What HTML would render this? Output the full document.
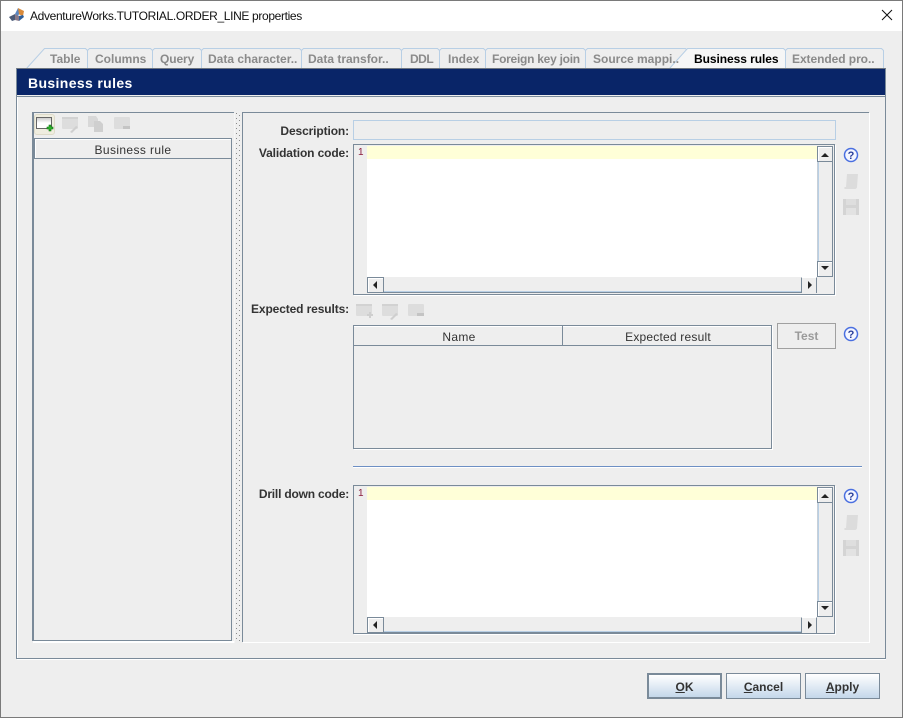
<!DOCTYPE html>
<html>
<head>
<meta charset="utf-8">
<style>
html,body{margin:0;padding:0;width:903px;height:718px;overflow:hidden;background:#eee}
body{position:relative;font-family:"Liberation Sans",sans-serif;font-size:12px;color:#333}
.a{position:absolute;box-sizing:border-box}
.t{position:absolute;white-space:nowrap;line-height:14px}
.lab{position:absolute;white-space:nowrap;line-height:14px;font-weight:bold;color:#333;text-align:right;right:554px;letter-spacing:-.12px}
.tab{position:absolute;top:52px;height:14px;line-height:14px;font-weight:bold;color:#8a8a8a;white-space:nowrap}
.btn{position:absolute;top:673px;height:26px;width:75px;box-sizing:border-box;border:1px solid #7a8a99;background:linear-gradient(#fff,#c4d7ea);text-align:center;font-weight:bold;line-height:26px;color:#333}
.btn u{text-decoration:underline}
svg{position:absolute;display:block}
</style>
</head>
<body>
<!-- window frame and title -->
<div class="a" style="left:0;top:0;width:903px;height:31px;background:#fff"></div>
<div class="t" style="left:30px;top:9px;font-size:12px;color:#111;letter-spacing:-.35px">AdventureWorks.TUTORIAL.ORDER_LINE properties</div>
<svg style="left:9px;top:7px" width="17" height="15" viewBox="0 0 17 15"><path d="M0 10l6-3v6l-3 1z" fill="#4a5a78"/><path d="M6 7l4 2v5l-4-1z" fill="#8a7a88"/><path d="M9 1l6 3-1 5-5-2z" fill="#d98a3a"/><path d="M9 1L6 7l3 2 1-2z" fill="#5a86c0"/><path d="M14 8l1 2-5 4v-5z" fill="#2f5f9a"/></svg>
<svg style="left:881px;top:9px" width="12" height="12" viewBox="0 0 12 12"><path d="M1 1l10 10M11 1L1 11" stroke="#111" stroke-width="1" fill="none"/></svg>

<!-- tabs -->
<svg style="left:0;top:45px" width="903" height="26" viewBox="0 0 903 26">
<g fill="#eee" stroke="#b8cfe5" stroke-width="1">
<path d="M26.500 23.500L44.500 3.500H85.500l2 2V23.500z" fill="#f0f0f0"/>
<path d="M87.500 23.500V5.500l2-2H150.500l2 2V23.500z"/>
<path d="M152.500 23.500V5.500l2-2H199.500l2 2V23.500z"/>
<path d="M201.500 23.500V5.500l2-2H299.500l2 2V23.500z"/>
<path d="M301.500 23.500V5.500l2-2H399.500l2 2V23.500z"/>
<path d="M401.500 23.500V5.500l2-2H437.500l2 2V23.500z"/>
<path d="M439.500 23.500V5.500l2-2H483.500l2 2V23.500z"/>
<path d="M485.500 23.500V5.500l2-2H583.500l2 2V23.500z"/>
<path d="M585.500 23.500V5.500l2-2H685.500l2 2V23.500z"/>
<path d="M785.500 23.500V5.500l2-2H881.500l2 2V23.500z"/>
<path d="M669.500 23.500L687.500 3.500H783.500l2 2V23.500z" fill="#f6f6f6"/>
</g>
</svg>
<div class="tab" style="left:50px">Table</div>
<div class="tab" style="left:95px">Columns</div>
<div class="tab" style="left:160px;letter-spacing:-.1px">Query</div>
<div class="tab" style="left:208px">Data character..</div>
<div class="tab" style="left:308px">Data transfor..</div>
<div class="tab" style="left:410px;letter-spacing:-.5px">DDL</div>
<div class="tab" style="left:448px">Index</div>
<div class="tab" style="left:492px;letter-spacing:-.26px">Foreign key join</div>
<div class="tab" style="left:593px">Source mappi..</div>
<div class="tab" style="left:694px;color:#000;letter-spacing:-.06px">Business rules</div>
<div class="tab" style="left:792px;letter-spacing:-.06px">Extended pro..</div>

<!-- tab panel -->
<div class="a" style="left:16px;top:68px;width:870px;height:591px;border:1px solid #7a8a99;border-top-color:#6e7680"></div>
<div class="a" style="left:17px;top:96px;width:868px;height:1px;background:#7a8a99"></div>
<div class="a" style="left:17px;top:659px;width:869px;height:1px;background:#fff"></div>
<div class="a" style="left:17px;top:97px;width:1px;height:561px;background:#fff"></div>
<div class="a" style="left:17px;top:69px;width:868px;height:26px;background:#092568"></div>
<div class="t" style="left:28px;top:76px;font-size:14px;font-weight:bold;color:#fff;letter-spacing:.36px">Business rules</div>

<!-- left pane -->
<div class="a" style="left:32px;top:112px;width:202px;height:1px;background:#7a8a99"></div>
<div class="a" style="left:32px;top:112px;width:2px;height:529px;background:#7a8a99"></div>
<div class="a" style="left:34px;top:138px;width:198px;height:21px;background:#eee;border:1px solid #7a8a99;box-shadow:inset 1px 1px 0 #fff"></div>
<div class="t" style="left:34px;width:198px;top:143px;text-align:center;color:#333;letter-spacing:.38px">Business rule</div>
<div class="a" style="left:231px;top:158px;width:1px;height:483px;background:#7a8a99"></div>
<div class="a" style="left:34px;top:640px;width:198px;height:1px;background:#7a8a99"></div>
<div class="a" style="left:33px;top:641px;width:201px;height:2px;background:#fff"></div>
<div class="a" style="left:234px;top:113px;width:1px;height:530px;background:#f6f6f6"></div>
<!-- add button + icons -->
<div class="a" style="left:34px;top:114px;width:21px;height:21px;background:#efeddf;border:1px solid #dedbc9;border-radius:3px"></div>
<svg style="left:36px;top:117px" width="18" height="16" viewBox="0 0 18 16"><defs><linearGradient id="g" x1="0" y1="0" x2="0" y2="1"><stop offset="0" stop-color="#c8c8c8"/><stop offset=".5" stop-color="#fff"/></linearGradient></defs><rect x=".5" y=".5" width="15" height="11" fill="url(#g)" stroke="#666"/><path d="M11 10h2V8h2v2h2v2h-2v2h-2v-2h-2z" fill="#2fb52f" stroke="#0c6e0c" stroke-width=".6"/></svg>
<svg style="left:62px;top:117px" width="18" height="16" viewBox="0 0 18 16"><rect width="16" height="12" rx="1" fill="#ddd"/><rect width="16" height="2" fill="#d2d2d2"/><path d="M8 15l6-6 2 1-6 6z" fill="#cfcfcf"/></svg>
<svg style="left:88px;top:116px" width="17" height="17" viewBox="0 0 17 17"><path d="M0 0h8l2 3v8H0z" fill="#d8d8d8"/><path d="M6 5h6l3 3v8H6z" fill="#cfcfcf"/></svg>
<svg style="left:114px;top:117px" width="17" height="14" viewBox="0 0 17 14"><rect width="16" height="12" rx="1" fill="#ddd"/><rect x="9" y="9" width="7" height="3" fill="#c4c4c4"/></svg>

<!-- splitter -->
<svg style="left:236px;top:113px" width="5" height="530" viewBox="0 0 5 530">
<defs><pattern id="d" width="5" height="5" patternUnits="userSpaceOnUse"><rect x="0" y="0" width="1" height="1" fill="#8a8a8a"/><rect x="3" y="2" width="1" height="1" fill="#8a8a8a"/></pattern></defs>
<rect width="5" height="530" fill="url(#d)"/></svg>

<!-- right pane -->
<div class="a" style="left:242px;top:112px;width:627px;height:1px;background:#7a8a99"></div>
<div class="a" style="left:242px;top:112px;width:1px;height:530px;background:#7a8a99"></div>
<div class="a" style="left:869px;top:113px;width:1px;height:530px;background:#fff"></div>
<div class="a" style="left:243px;top:642px;width:627px;height:1px;background:#fff"></div>

<div class="lab" style="top:124px">Description:</div>
<div class="a" style="left:353px;top:120px;width:483px;height:20px;border:1px solid #b8cfe5;background:#eee"></div>
<div class="lab" style="top:146px">Validation code:</div>

<!-- editor 1 -->
<div class="a" style="left:353px;top:144px;width:482px;height:151px;border:1px solid #7a8a99;background:#eee;box-shadow:1px 1px 0 #fff"></div>
<div class="a" style="left:367px;top:146px;width:450px;height:13px;background:#ffffd8"></div>
<div class="a" style="left:367px;top:159px;width:450px;height:118px;background:#fff"></div>
<div class="t" style="left:358px;top:146px;font-size:10px;line-height:14px;color:#8a1c3c">1</div>
<!-- v scrollbar -->
<div class="a" style="left:817px;top:146px;width:16px;height:131px;border-right:1px solid #7a8a99;border-left:1px solid #c8d0d8;background:#eee"></div>
<div class="a" style="left:817px;top:146px;width:16px;height:16px;background:#eee;border:1px solid #7a8a99;box-shadow:inset 1px 1px 0 #fff"></div>
<div class="a" style="left:817px;top:261px;width:16px;height:16px;background:#eee;border:1px solid #7a8a99;box-shadow:inset 1px 1px 0 #fff"></div>
<div class="a" style="left:818px;top:162px;width:1px;height:99px;background:#b8cfe5"></div>
<svg style="left:820px;top:152px" width="10" height="5"><path d="M1 5L5 1l4 4z" fill="#222"/></svg>
<svg style="left:820px;top:266px" width="10" height="5"><path d="M1 0h8L5 4z" fill="#222"/></svg>
<!-- h scrollbar -->
<div class="a" style="left:367px;top:277px;width:450px;height:16px;border-bottom:1px solid #7a8a99;background:#eee;box-shadow:inset 0 -1px 0 #b8cfe5"></div>
<div class="a" style="left:367px;top:277px;width:17px;height:16px;border:1px solid #7a8a99;border-bottom-width:1px;background:#eee;box-shadow:inset 1px 1px 0 #fff"></div>
<div class="a" style="left:801px;top:277px;width:16px;height:16px;border-left:1px solid #7a8a99;border-right:1px solid #7a8a99;border-top:1px solid #fff;background:#eee"></div>
<svg style="left:372px;top:280px" width="6" height="10"><path d="M5 1v8L1 5z" fill="#222"/></svg>
<svg style="left:807px;top:280px" width="6" height="10"><path d="M1 1v8l4-4z" fill="#222"/></svg>

<!-- expected results -->
<div class="lab" style="top:302px">Expected results:</div>
<svg style="left:356px;top:304px" width="18" height="16" viewBox="0 0 18 16"><rect width="16" height="12" rx="1" fill="#ddd"/><rect width="16" height="2" fill="#d2d2d2"/><path d="M11 10h2V8h2v2h2v2h-2v2h-2v-2h-2z" fill="#cfcfcf"/></svg>
<svg style="left:382px;top:304px" width="18" height="16" viewBox="0 0 18 16"><rect width="16" height="12" rx="1" fill="#ddd"/><rect width="16" height="2" fill="#d2d2d2"/><path d="M8 15l6-6 2 1-6 6z" fill="#cfcfcf"/></svg>
<svg style="left:408px;top:304px" width="17" height="14" viewBox="0 0 17 14"><rect width="16" height="12" rx="1" fill="#ddd"/><rect x="9" y="9" width="7" height="3" fill="#c4c4c4"/></svg>

<div class="a" style="left:353px;top:325px;width:419px;height:124px;border:1px solid #7a8a99;background:#eee;box-shadow:1px 1px 0 #fff"></div>
<div class="a" style="left:354px;top:326px;width:417px;height:20px;border-bottom:1px solid #7a8a99;box-shadow:inset 0 1px 0 #fff"></div>
<div class="a" style="left:562px;top:326px;width:1px;height:20px;background:#7a8a99"></div>
<div class="t" style="left:355px;width:208px;top:330px;text-align:center;letter-spacing:.3px">Name</div>
<div class="t" style="left:564px;width:208px;top:330px;text-align:center;letter-spacing:.2px">Expected result</div>
<div class="a" style="left:777px;top:323px;width:59px;height:26px;border:1px solid #a0a0a0;background:#eee;text-align:center;font-weight:bold;line-height:25px;color:#9a9a9a">Test</div>

<div class="a" style="left:353px;top:466px;width:509px;height:1px;background:#6d8fc4"></div>
<div class="a" style="left:353px;top:467px;width:509px;height:1px;background:#fff"></div>

<div class="lab" style="top:487px;letter-spacing:-.2px">Drill down code:</div>
<!-- editor 2 -->
<div class="a" style="left:353px;top:485px;width:482px;height:149px;border:1px solid #7a8a99;background:#eee;box-shadow:1px 1px 0 #fff"></div>
<div class="a" style="left:367px;top:487px;width:450px;height:13px;background:#ffffd8"></div>
<div class="a" style="left:367px;top:500px;width:450px;height:117px;background:#fff"></div>
<div class="t" style="left:358px;top:487px;font-size:10px;line-height:14px;color:#8a1c3c">1</div>
<div class="a" style="left:817px;top:487px;width:16px;height:130px;border-right:1px solid #7a8a99;border-left:1px solid #c8d0d8;background:#eee"></div>
<div class="a" style="left:817px;top:487px;width:16px;height:16px;background:#eee;border:1px solid #7a8a99;box-shadow:inset 1px 1px 0 #fff"></div>
<div class="a" style="left:817px;top:601px;width:16px;height:16px;background:#eee;border:1px solid #7a8a99;box-shadow:inset 1px 1px 0 #fff"></div>
<div class="a" style="left:818px;top:503px;width:1px;height:98px;background:#b8cfe5"></div>
<svg style="left:820px;top:493px" width="10" height="5"><path d="M1 5L5 1l4 4z" fill="#222"/></svg>
<svg style="left:820px;top:606px" width="10" height="5"><path d="M1 0h8L5 4z" fill="#222"/></svg>
<div class="a" style="left:367px;top:617px;width:450px;height:16px;border-bottom:1px solid #7a8a99;background:#eee;box-shadow:inset 0 -1px 0 #b8cfe5"></div>
<div class="a" style="left:367px;top:617px;width:17px;height:16px;border:1px solid #7a8a99;background:#eee;box-shadow:inset 1px 1px 0 #fff"></div>
<div class="a" style="left:801px;top:617px;width:16px;height:16px;border-left:1px solid #7a8a99;border-right:1px solid #7a8a99;border-top:1px solid #fff;background:#eee"></div>
<svg style="left:372px;top:620px" width="6" height="10"><path d="M5 1v8L1 5z" fill="#222"/></svg>
<svg style="left:807px;top:620px" width="6" height="10"><path d="M1 1v8l4-4z" fill="#222"/></svg>

<!-- help icons -->
<svg style="left:843px;top:147px" width="16" height="16" viewBox="0 0 16 16"><circle cx="8" cy="8" r="6.500" fill="#f4f6ff" stroke="#4a6fe0" stroke-width="1.500"/><text x="8" y="12" text-anchor="middle" font-family="Liberation Sans" font-size="11" font-weight="bold" fill="#2a3f9a">?</text></svg>
<svg style="left:843px;top:326px" width="16" height="16" viewBox="0 0 16 16"><circle cx="8" cy="8" r="6.500" fill="#f4f6ff" stroke="#4a6fe0" stroke-width="1.500"/><text x="8" y="12" text-anchor="middle" font-family="Liberation Sans" font-size="11" font-weight="bold" fill="#2a3f9a">?</text></svg>
<svg style="left:843px;top:488px" width="16" height="16" viewBox="0 0 16 16"><circle cx="8" cy="8" r="6.500" fill="#f4f6ff" stroke="#4a6fe0" stroke-width="1.500"/><text x="8" y="12" text-anchor="middle" font-family="Liberation Sans" font-size="11" font-weight="bold" fill="#2a3f9a">?</text></svg>
<!-- scroll + save icons -->
<svg style="left:844px;top:173px" width="15" height="17" viewBox="0 0 15 17"><path d="M3 1h11l-1 13c0 1-1 2-2 2H1c-1 0-1-2 0-2h1z" fill="#dcdcdc"/></svg>
<svg style="left:843px;top:199px" width="16" height="16" viewBox="0 0 16 16"><rect width="16" height="16" fill="#d4d4d4"/><rect x="3" y="0" width="10" height="6" fill="#dedede"/><rect x="3" y="9" width="10" height="7" fill="#e2e2e2"/></svg>
<svg style="left:844px;top:514px" width="15" height="17" viewBox="0 0 15 17"><path d="M3 1h11l-1 13c0 1-1 2-2 2H1c-1 0-1-2 0-2h1z" fill="#dcdcdc"/></svg>
<svg style="left:843px;top:540px" width="16" height="16" viewBox="0 0 16 16"><rect width="16" height="16" fill="#d4d4d4"/><rect x="3" y="0" width="10" height="6" fill="#dedede"/><rect x="3" y="9" width="10" height="7" fill="#e2e2e2"/></svg>

<!-- buttons -->
<div class="btn" style="left:647px;border:2px solid #7a8a99;line-height:24px"><u>O</u>K</div>
<div class="btn" style="left:726px"><u>C</u>ancel</div>
<div class="btn" style="left:805px"><u>A</u>pply</div>

<!-- window border -->
<div class="a" style="left:0;top:0;width:903px;height:718px;border:1px solid #7a7a7a;pointer-events:none"></div>
</body>
</html>
